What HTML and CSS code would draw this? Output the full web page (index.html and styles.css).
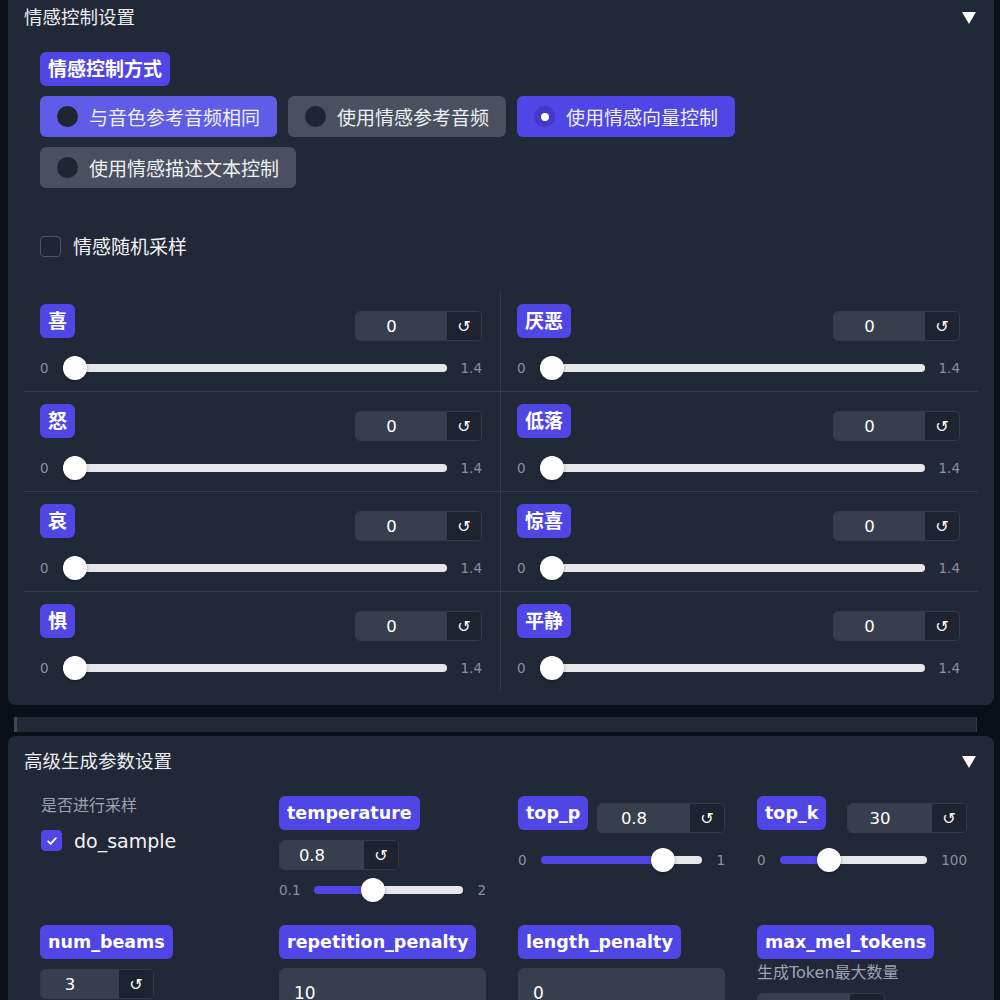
FILE: index.html
```html
<!DOCTYPE html>
<html lang="zh-CN">
<head>
    <meta charset="UTF-8">
    <meta name="viewport" content="width=device-width, initial-scale=1.0">
    <title>情感控制设置</title>
    <link rel="stylesheet" href="styles.css">
</head>
<body>
<div class="page">

    <!-- 情感控制 -->
    <section class="panel panel-first">
        <div class="panel-head">
            <span class="panel-title">情感控制设置</span>
            <span class="caret"></span>
        </div>

        <div class="block">
            <span class="badge zh">情感控制方式</span>
            <div class="radio-group">
                <label class="radio hover"><span class="dot"></span>与音色参考音频相同</label>
                <label class="radio"><span class="dot"></span>使用情感参考音频</label>
                <label class="radio selected"><span class="dot"></span>使用情感向量控制</label>
                <label class="radio"><span class="dot"></span>使用情感描述文本控制</label>
            </div>
        </div>

        <div class="block block-check">
            <label class="check"><span class="box"></span>情感随机采样</label>
        </div>

        <div class="emo-grid">
            <div class="emo">
                <div class="param-head">
                    <span class="badge zh">喜</span>
                    <div class="num-group"><input class="num" type="number" value="0"><button class="reset">↺</button></div>
                </div>
                <div class="slider-row"><span class="lim">0</span><input type="range" min="0" max="1.4" step="0.05" value="0" style="--fill:0%"><span class="lim">1.4</span></div>
            </div>
            <div class="emo">
                <div class="param-head">
                    <span class="badge zh">厌恶</span>
                    <div class="num-group"><input class="num" type="number" value="0"><button class="reset">↺</button></div>
                </div>
                <div class="slider-row"><span class="lim">0</span><input type="range" min="0" max="1.4" step="0.05" value="0" style="--fill:0%"><span class="lim">1.4</span></div>
            </div>
            <div class="emo">
                <div class="param-head">
                    <span class="badge zh">怒</span>
                    <div class="num-group"><input class="num" type="number" value="0"><button class="reset">↺</button></div>
                </div>
                <div class="slider-row"><span class="lim">0</span><input type="range" min="0" max="1.4" step="0.05" value="0" style="--fill:0%"><span class="lim">1.4</span></div>
            </div>
            <div class="emo">
                <div class="param-head">
                    <span class="badge zh">低落</span>
                    <div class="num-group"><input class="num" type="number" value="0"><button class="reset">↺</button></div>
                </div>
                <div class="slider-row"><span class="lim">0</span><input type="range" min="0" max="1.4" step="0.05" value="0" style="--fill:0%"><span class="lim">1.4</span></div>
            </div>
            <div class="emo">
                <div class="param-head">
                    <span class="badge zh">哀</span>
                    <div class="num-group"><input class="num" type="number" value="0"><button class="reset">↺</button></div>
                </div>
                <div class="slider-row"><span class="lim">0</span><input type="range" min="0" max="1.4" step="0.05" value="0" style="--fill:0%"><span class="lim">1.4</span></div>
            </div>
            <div class="emo">
                <div class="param-head">
                    <span class="badge zh">惊喜</span>
                    <div class="num-group"><input class="num" type="number" value="0"><button class="reset">↺</button></div>
                </div>
                <div class="slider-row"><span class="lim">0</span><input type="range" min="0" max="1.4" step="0.05" value="0" style="--fill:0%"><span class="lim">1.4</span></div>
            </div>
            <div class="emo">
                <div class="param-head">
                    <span class="badge zh">惧</span>
                    <div class="num-group"><input class="num" type="number" value="0"><button class="reset">↺</button></div>
                </div>
                <div class="slider-row"><span class="lim">0</span><input type="range" min="0" max="1.4" step="0.05" value="0" style="--fill:0%"><span class="lim">1.4</span></div>
            </div>
            <div class="emo">
                <div class="param-head">
                    <span class="badge zh">平静</span>
                    <div class="num-group"><input class="num" type="number" value="0"><button class="reset">↺</button></div>
                </div>
                <div class="slider-row"><span class="lim">0</span><input type="range" min="0" max="1.4" step="0.05" value="0" style="--fill:0%"><span class="lim">1.4</span></div>
            </div>
        </div>
    </section>

    <div class="spacer"></div>

    <!-- 高级参数 -->
    <section class="panel">
        <div class="panel-head">
            <span class="panel-title">高级生成参数设置</span>
            <span class="caret"></span>
        </div>

        <div class="params">
            <div class="param">
                <div class="hint">是否进行采样</div>
                <label class="check check-sample"><span class="box checked"><svg viewBox="0 0 20 20" width="14" height="14"><path d="M4.5 10.5l3.5 3.5 7.5-8" fill="none" stroke="#fff" stroke-width="2.6" stroke-linecap="round" stroke-linejoin="round"/></svg></span>do_sample</label>
            </div>

            <div class="param wrapped">
                <div class="param-head">
                    <span class="badge">temperature</span>
                    <div class="num-group"><input class="num num-sm" type="number" value="0.8"><button class="reset">↺</button></div>
                </div>
                <div class="slider-row"><span class="lim">0.1</span><input type="range" min="0.1" max="2" step="0.1" value="0.8" style="--fill:39%"><span class="lim">2</span></div>
            </div>

            <div class="param">
                <div class="param-head">
                    <span class="badge">top_p</span>
                    <div class="num-group"><input class="num num-md" type="number" value="0.8"><button class="reset">↺</button></div>
                </div>
                <div class="slider-row"><span class="lim">0</span><input type="range" min="0" max="1" step="0.01" value="0.8" style="--fill:75%"><span class="lim">1</span></div>
            </div>

            <div class="param">
                <div class="param-head">
                    <span class="badge">top_k</span>
                    <div class="num-group"><input class="num num-sm" type="number" value="30"><button class="reset">↺</button></div>
                </div>
                <div class="slider-row"><span class="lim">0</span><input type="range" min="0" max="100" step="1" value="30" style="--fill:33%"><span class="lim">100</span></div>
            </div>

            <div class="param">
                <div class="param-head">
                    <span class="badge">num_beams</span>
                    <div class="num-group"><input class="num num-xs" type="number" value="3"><button class="reset">↺</button></div>
                </div>
            </div>

            <div class="param">
                <span class="badge">repetition_penalty</span>
                <div class="textbox">10</div>
            </div>

            <div class="param">
                <span class="badge">length_penalty</span>
                <div class="textbox">0</div>
            </div>

            <div class="param">
                <span class="badge">max_mel_tokens</span>
                <div class="hint hint-sub">生成Token最大数量</div>
                <div class="num-group num-below"><input class="num num-md" type="number" value="1500"><button class="reset">↺</button></div>
            </div>
        </div>
    </section>

</div>
</body>
</html>
```

FILE: styles.css
```css
body {
    margin: 0;
    background: #0b0f19;
    color: #f3f4f6;
    font-family: "DejaVu Sans", "Noto Sans CJK SC", sans-serif;
    font-size: 19px;
    overflow: hidden;
}
.page {
    padding: 0 6px 0 8px;
}
.panel {
    background: #212838;
    border-radius: 8px;
    padding: 16px 16px 14px 16px;
}
.panel-first {
    margin-top: -8px;
}
.panel-head {
    display: flex;
    justify-content: space-between;
    align-items: center;
    height: 20px;
}
.panel-title {
    font-size: 18.5px;
    line-height: 20px;
    color: #eceef2;
}
.caret {
    width: 0;
    height: 0;
    margin-right: 2px;
    border-left: 7px solid transparent;
    border-right: 7px solid transparent;
    border-top: 12px solid #fff;
}
.block {
    margin-top: 8px;
    padding: 16px;
}
.block-check {
    margin-top: 16px;
}

/* labels */
.badge {
    display: inline-block;
    height: 34px;
    line-height: 34px;
    padding: 0 8px;
    border-radius: 6px;
    background: #4f46e5;
    color: #fff;
    font-weight: 700;
    font-size: 17.5px;
    white-space: nowrap;
}
.badge.zh {
    font-size: 19px;
}

/* radio buttons */
.radio-group {
    display: flex;
    flex-wrap: wrap;
    gap: 10px 11px;
    margin-top: 10px;
}
.radio {
    display: flex;
    align-items: center;
    gap: 11px;
    height: 41px;
    padding: 0 17px;
    border-radius: 6px;
    background: #4a5060;
    color: #eef0f3;
    font-size: 19px;
}
.radio.hover {
    background: #5f5ce8;
}
.radio.selected {
    background: #4f46e5;
}
.dot {
    width: 21px;
    height: 21px;
    border-radius: 50%;
    background: #1f2533;
    flex: none;
    display: flex;
    align-items: center;
    justify-content: center;
}
.radio.selected .dot {
    background: #4338ca;
}
.radio.selected .dot::after {
    content: "";
    width: 8px;
    height: 8px;
    border-radius: 50%;
    background: #fff;
}

/* checkbox */
.check {
    display: flex;
    align-items: center;
    gap: 12px;
    line-height: 20px;
    font-size: 19px;
}
.box {
    width: 19px;
    height: 19px;
    border: 1px solid #4b5563;
    border-radius: 4px;
    background: #1f2533;
    flex: none;
    display: flex;
    align-items: center;
    justify-content: center;
}
.box.checked {
    background: #4f46e5;
    border-color: #4f46e5;
}
.check-sample {
    margin-top: 14px;
    margin-left: 1px;
}

/* emotion sliders */
.emo-grid {
    display: grid;
    grid-template-columns: 1fr 1fr;
    margin-top: 19px;
}
.emo {
    padding: 12px 18px 11px 16px;
    border-bottom: 1px solid #343b4a;
}
.emo:nth-child(odd) {
    border-right: 1px solid #343b4a;
}
.emo:nth-last-child(-n+2) {
    border-bottom: none;
}

.param-head {
    display: flex;
    flex-wrap: wrap;
    justify-content: space-between;
    align-items: flex-start;
    gap: 3px 6px;
}
.num-group {
    display: flex;
    height: 30px;
    margin-top: 7px;
    border: 1px solid #343b4a;
    border-radius: 5px;
    overflow: hidden;
    box-sizing: border-box;
}
.num {
    box-sizing: border-box;
    width: 91px;
    border: none;
    outline: none;
    margin: 0;
    padding: 0 20px 0 0;
    background: #373e4e;
    color: #fff;
    font-family: inherit;
    font-size: 16.5px;
    text-align: center;
    -moz-appearance: textfield;
}
.num::-webkit-inner-spin-button,
.num::-webkit-outer-spin-button {
    -webkit-appearance: none;
    margin: 0;
}
.num-xs { width: 78px; }
.num-sm { width: 84px; }
.num-md { width: 92px; }
.reset {
    box-sizing: border-box;
    width: 34px;
    border: none;
    padding: 0;
    background: #1d2330;
    color: #fff;
    font-family: inherit;
    font-size: 16px;
}

.slider-row {
    display: flex;
    align-items: center;
    gap: 14px;
    margin-top: 15px;
    height: 24px;
}
.param.wrapped .slider-row {
    margin-top: 8px;
}
.lim {
    font-size: 13.5px;
    color: #8b919c;
}
.slider-row input[type=range] {
    -webkit-appearance: none;
    appearance: none;
    flex: 1;
    min-width: 0;
    height: 24px;
    margin: 0;
    background: transparent;
}
.slider-row input[type=range]::-webkit-slider-runnable-track {
    height: 8px;
    border-radius: 4px;
    background: linear-gradient(to right, #4f46e5 var(--fill), #e5e7eb var(--fill));
}
.slider-row input[type=range]::-webkit-slider-thumb {
    -webkit-appearance: none;
    width: 24px;
    height: 24px;
    margin-top: -8px;
    border-radius: 50%;
    background: #fff;
    box-shadow: 0 1px 3px rgba(0, 0, 0, 0.35);
}

.spacer {
    height: 15px;
    margin: 12px 17px 4px 6px;
    background: #222938;
    border-left: 3px solid #3f4654;
    border-right: 1px solid #353c4a;
}

/* advanced params */
.params {
    display: grid;
    grid-template-columns: 207px 207px 207px 210px;
    column-gap: 32px;
    row-gap: 23px;
    margin-top: 8px;
    padding: 16px;
}
.hint {
    font-size: 16px;
    line-height: 20px;
    color: #9ca3af;
    margin-left: 1px;
}
.hint-sub {
    margin-top: 4px;
    margin-left: 0;
}
.num-below {
    margin-top: 10px;
    width: max-content;
}
.param-head .num-group {
    width: max-content;
}
.textbox {
    margin-top: 9px;
    padding: 14px 15px;
    line-height: 22px;
    border-radius: 6px;
    background: #373e4e;
    color: #fff;
    font-size: 17px;
}
```
